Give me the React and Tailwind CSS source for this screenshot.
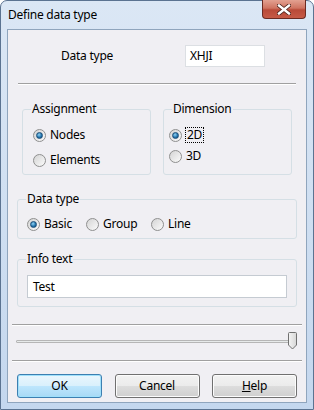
function Radio({ checked, label, focus }) {
    return (
        <label className="flex items-center gap-[4px]">
            <span className="w-[13px] h-[13px] rounded-full border border-[#8f8f8f] bg-[linear-gradient(135deg,#d4d4d4,#fbfbfb)] flex items-center justify-center">
                {checked && (
                    <span className="w-[7px] h-[7px] rounded-full bg-[radial-gradient(circle_at_40%_35%,#8fd3f5,#1f6fa8_60%,#0d4a7a)] border border-[#1b4e78]" />
                )}
            </span>
            <span className={focus ? "outline outline-1 outline-dotted outline-black leading-[14px] px-px" : "leading-[14px]"}>{label}</span>
        </label>
    );
}

function Group({ title, className, children }) {
    return (
        <div className={"relative border border-[#d5dfe5] rounded-[3px] " + className}>
            <span className="absolute -top-[9px] left-[8px] px-px bg-[#f0eff3] leading-[16px]">{title}</span>
            {children}
        </div>
    );
}

function Button({ children, primary }) {
    return (
        <button
            className={
                "w-[85px] h-[24px] rounded-[3px] border text-center leading-[20px] " +
                (primary
                    ? "border-[#3c7fb1] bg-[linear-gradient(#eaf6fd_0%,#d9f0fc_50%,#bee6fd_50%,#a7d9f5_100%)] shadow-[inset_0_0_0_1px_#9fe0fb]"
                    : "border-[#707070] bg-[linear-gradient(#f2f2f2_0%,#ebebeb_50%,#dddddd_50%,#cfcfcf_100%)] shadow-[inset_0_0_0_1px_#fcfcfc]")
            }
        >
            {children}
        </button>
    );
}

export default function App() {
    return (
        <div className="w-[314px] h-[410px] bg-[linear-gradient(#dbe7f5,#c4d7ee)] border border-[#5b7391] rounded-t-[7px] flex flex-col text-[12px] tracking-[-0.25px] text-black relative" style={{ fontFamily: '"Noto Sans", sans-serif' }}>
            <div className="h-[28px] flex items-center pl-[7px]">Define data type</div>
            <div className="absolute top-[-1px] right-[7px] w-[44px] h-[19px] rounded-b-[4px] border border-[#6b2b22] border-t-0 bg-[linear-gradient(#e3a191,#cf7461_45%,#b94a38_55%,#c65a46)] flex items-center justify-center">
                <svg width="14" height="11" viewBox="0 0 14 11">
                    <path d="M2 1.5 L12 9.5 M12 1.5 L2 9.5" stroke="#4a2018" strokeWidth="4" strokeLinecap="square" />
                    <path d="M2 1.5 L12 9.5 M12 1.5 L2 9.5" stroke="#ffffff" strokeWidth="2.4" strokeLinecap="square" />
                </svg>
            </div>
            <div className="mx-[6px] mb-[6px] flex-1 border border-[#8fa5bd] bg-[#f0eff3] flex flex-col">
                <div className="flex items-center h-[22px] mt-[15px]">
                    <span className="ml-[53px] w-[124px]">Data type</span>
                    <div className="w-[80px] h-[22px] border border-[#dcdfe3] bg-white flex items-center pl-[4px]">XHJI</div>
                </div>
                <div className="mx-[10px] mt-[16px] h-[2px] border-t border-[#a0a0a0] border-b-white border-b" />
                <div className="flex mx-[14px] mt-[24px] justify-between">
                    <Group title="Assignment" className="w-[129px] h-[66px]">
                        <div className="flex flex-col gap-[11px] pl-[10px] pt-[18px]">
                            <Radio checked label="Nodes" />
                            <Radio label="Elements" />
                        </div>
                    </Group>
                    <Group title="Dimension" className="w-[129px] h-[66px]">
                        <div className="flex flex-col gap-[7px] pl-[5px] pt-[18px]">
                            <Radio checked focus label="2D" />
                            <Radio label="3D" />
                        </div>
                    </Group>
                </div>
                <Group title="Data type" className="mx-[9px] mt-[24px] h-[40px]">
                    <div className="flex pl-[9px] pt-[17px]">
                        <div className="w-[59px]"><Radio checked label="Basic" /></div>
                        <div className="w-[65px]"><Radio label="Group" /></div>
                        <Radio label="Line" />
                    </div>
                </Group>
                <Group title="Info text" className="mx-[9px] mt-[20px] h-[48px]">
                    <div className="mx-[9px] mt-[15px] h-[23px] border border-[#c5cbd2] bg-white flex items-center pl-[5px]">Test</div>
                </Group>
                <div className="mx-[4px] mt-[17px] h-[2px] border-t border-[#a0a0a0] border-b-white border-b" />
                <div className="relative h-[34px] mx-[7px]">
                    <div className="absolute left-[1px] right-[10px] top-[14px] h-[3px] border border-[#b6b6b6] bg-[#e7eaea] rounded-[1px]" />
                    <svg className="absolute right-[1px] top-[6px]" width="11" height="18" viewBox="0 0 11 18">
                        <defs>
                            <linearGradient id="th" x1="0" x2="1">
                                <stop offset="0" stopColor="#f4f4f4" />
                                <stop offset="1" stopColor="#d6d6d6" />
                            </linearGradient>
                        </defs>
                        <path d="M1.5 1.5 Q1.5 0.5 2.5 0.5 L8.5 0.5 Q9.5 0.5 9.5 1.5 L9.5 13 L5.5 17 L1.5 13 Z" fill="url(#th)" stroke="#707070" />
                    </svg>
                </div>
                <div className="mx-[4px] h-[2px] border-t border-[#a0a0a0] border-b-white border-b" />
                <div className="flex mx-[9px] mt-[12px] justify-between">
                    <Button primary>OK</Button>
                    <Button>Cancel</Button>
                    <Button><span className="underline">H</span>elp</Button>
                </div>
            </div>
        </div>
    );
}
